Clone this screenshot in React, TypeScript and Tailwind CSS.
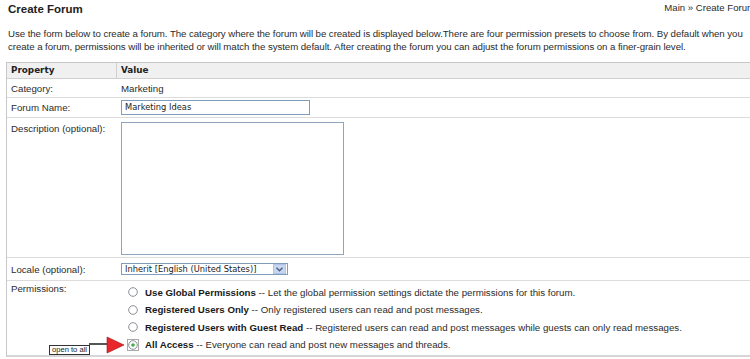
import { ReactNode } from 'react'

const permissions = [
  { name: 'Use Global Permissions', text: 'Let the global permission settings dictate the permissions for this forum.', checked: false },
  { name: 'Registered Users Only', text: 'Only registered users can read and post messages.', checked: false },
  { name: 'Registered Users with Guest Read', text: 'Registered users can read and post messages while guests can only read messages.', checked: false },
  { name: 'All Access', text: 'Everyone can read and post new messages and threads.', checked: true },
]

function Radio({ checked }: { checked: boolean }) {
  return (
    <svg width="12" height="12" viewBox="0 0 12 12" className="shrink-0">
      {checked && <rect x="0.5" y="0.5" width="11" height="11" fill="none" stroke="#555" strokeWidth="1" strokeDasharray="1 1" />}
      <circle cx="6" cy="6" r="4.3" fill="#fff" stroke="#8a8f96" strokeWidth="1" />
      {checked && <circle cx="6" cy="6" r="1.8" fill="#3fae3f" />}
    </svg>
  )
}

function Row({ label, children, className = '', labelClass = '' }: { label: string, children: ReactNode, className?: string, labelClass?: string }) {
  return (
    <div className={`flex border-b border-[#dcdcdc] ${className}`}>
      <div className={`w-[110px] shrink-0 pl-[4px] ${labelClass}`}>{label}</div>
      <div className="flex-1 pl-[4px]">{children}</div>
    </div>
  )
}

export default function App() {
  return (
    <div className="relative w-[750px] h-[359px] overflow-hidden bg-white text-[#2b2b2b] text-[9.7px] leading-[13px] font-['Liberation_Sans',Arial,sans-serif]">
      <div className="flex justify-between items-center h-[18px] pl-[8px]">
        <h1 className="font-bold text-[11.5px] leading-[14px] text-[#222]">Create Forum</h1>
        <div className="text-[9.6px] leading-[12px] -mt-[3px] whitespace-nowrap mr-[-5px]">Main » Create Forum</div>
      </div>

      <p className="pl-[8px] mt-[9px] whitespace-nowrap tracking-[-0.07px]">
        Use the form below to create a forum. The category where the forum will be created is displayed below.There are four permission presets to choose from. By default when you
        <br />
        create a forum, permissions will be inherited or will match the system default. After creating the forum you can adjust the forum permissions on a finer-grain level.
      </p>

      <div className="ml-[6px] mt-[9px] w-[760px] border-l border-t border-[#c8c8c8]">
        <div className="flex h-[16px] items-center bg-[#f0f0f0] border-b border-[#d0d0d0] font-bold text-[8.8px] text-[#222] font-['DejaVu_Sans',Verdana,sans-serif]">
          <div className="w-[110px] shrink-0 pl-[4px] h-full flex items-center border-r border-[#d0d0d0]">Property</div>
          <div className="pl-[4px]">Value</div>
        </div>

        <Row label="Category:" className="h-[19px] items-center">
          Marketing
        </Row>

        <Row label="Forum Name:" className="h-[20px] items-center">
          <div className="w-[189px] h-[15px] border border-[#7f9db9] flex items-center pl-[3px] text-[8.3px] font-['DejaVu_Sans',Verdana,sans-serif] text-[#222]">
            Marketing Ideas
          </div>
        </Row>

        <Row label="Description (optional):" className="h-[140px] pt-[4px]">
          <div className="w-[223px] h-[133px] border border-[#8fa5bd]" />
        </Row>

        <Row label="Locale (optional):" className="h-[23px] items-center">
          <div className="w-[167px] h-[12px] border border-[#7f9db9] flex items-center justify-between text-[8.3px] font-['DejaVu_Sans',Verdana,sans-serif] text-[#222]">
            <span className="pl-[3px] leading-[10px] whitespace-nowrap">Inherit [English (United States)]</span>
            <span className="w-[13px] h-[10px] mr-[1px] bg-[#c8d6f0] border border-[#b0c4ea] flex items-center justify-center">
              <svg width="7" height="5" viewBox="0 0 7 5"><path d="M0.5 0.8 L3.5 3.8 L6.5 0.8" fill="none" stroke="#4d6185" strokeWidth="1.4" /></svg>
            </span>
          </div>
        </Row>

        <Row label="Permissions:" className="h-[76px] border-b-2 border-b-[#d6d6d6]" labelClass="pt-[1px]">
          <div className="flex flex-col pt-[4.5px] pl-[6px] gap-[4.6px]">
            {permissions.map((p) => (
              <div key={p.name} className="flex items-center gap-[6px] h-[13px]">
                <Radio checked={p.checked} />
                <span className="whitespace-nowrap"><b className="text-[#1a1a1a]">{p.name}</b> -- {p.text}</span>
              </div>
            ))}
          </div>
        </Row>
      </div>

      <div className="absolute left-[49px] top-[345px] w-[41px] h-[10px] border border-[#333] bg-white text-[7.6px] leading-[7px] pl-[2px] text-[#222] whitespace-nowrap">
        open to all
      </div>
      <svg width="36" height="20" viewBox="0 0 36 20" className="absolute left-[89px] top-[336px]">
        <rect x="0" y="7" width="19" height="2" fill="#555" />
        <path d="M18 1 L35 9 L18 17 Z" fill="#e8262b" stroke="#a01010" strokeWidth="0.6" />
      </svg>
    </div>
  )
}
